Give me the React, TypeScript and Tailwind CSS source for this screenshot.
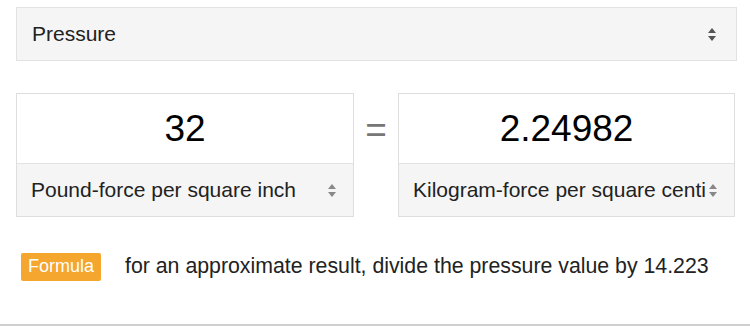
import React from "react";

function Spinner({ color = "#555" }: { color?: string }) {
  return (
    <svg width="10" height="17" viewBox="0 0 10 17" className="flex-none">
      <polygon points="1,7 5,2 9,7" fill={color} />
      <polygon points="1,10 5,15 9,10" fill={color} />
    </svg>
  );
}

function UnitBox({ value, unit }: { value: string; unit: string }) {
  return (
    <div className="flex flex-col border border-[#dedede] bg-white">
      <div className="flex h-[69px] items-center justify-center text-[37px] text-black">{value}</div>
      <div className="flex h-[53px] items-center border-t border-[#e2e2e2] bg-[#f5f5f5] pl-[14px] pr-[16px] text-[21px] text-[#222]">
        <span className="min-w-0 flex-1 overflow-hidden whitespace-nowrap">{unit}</span>
        <Spinner color="#888" />
      </div>
    </div>
  );
}

export default function App() {
  return (
    <div className="h-[326px] w-[750px] border-b-2 border-[#cfcfcf] bg-white font-['Liberation_Sans',Arial,sans-serif]">
      <div className="pl-4 pr-[13px] pt-[7px]">
        <div className="flex h-[54px] items-center justify-between border border-[#e2e2e2] bg-[#f5f5f5] pl-[15px] pr-[19px] text-[21px] text-[#222]">
          <span>Pressure</span>
          <Spinner />
        </div>

        <div className="mt-[32px] flex items-start">
          <div className="w-[338px]">
            <UnitBox value="32" unit="Pound-force per square inch" />
          </div>
          <div className="mt-[18px] flex w-[44px] justify-center text-[37px] leading-none text-[#777]">=</div>
          <div className="w-[337px]">
            <UnitBox value="2.24982" unit="Kilogram-force per square centi" />
          </div>
        </div>

        <div className="mt-[34px] flex items-center pl-[5px]">
          <span className="flex h-[28px] w-[80px] items-center justify-center rounded-[2px] bg-[#f4a62f] text-[18px] text-white">
            Formula
          </span>
          <span className="ml-[24px] text-[21.3px] text-[#222]">
            for an approximate result, divide the pressure value by 14.223
          </span>
        </div>
      </div>
    </div>
  );
}
